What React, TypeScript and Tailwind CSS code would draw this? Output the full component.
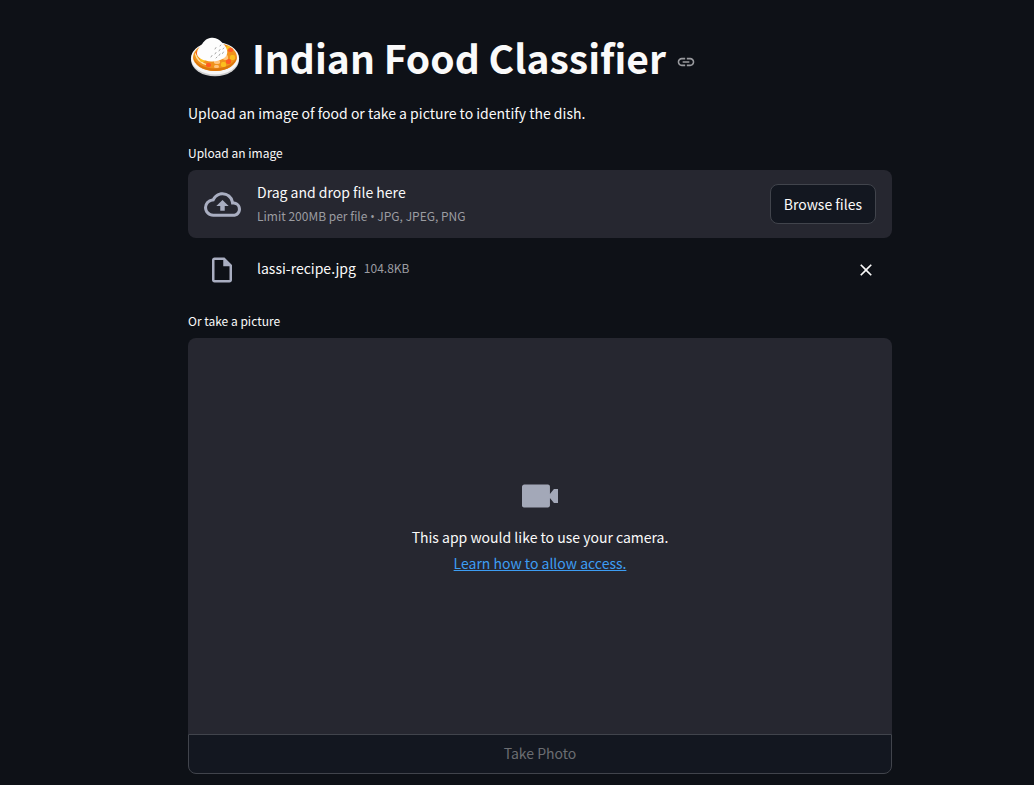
import type { ReactNode } from 'react'

function CurryEmoji() {
  return (
    <svg viewBox="0 0 50 40" className="h-10 w-[50px] shrink-0" role="img" aria-label="Curry and rice">
      <ellipse cx="25" cy="22.5" rx="24" ry="16.800" fill="#cfcfcf" />
      <ellipse cx="25" cy="21.3" rx="24" ry="16.300" fill="#f7f7f7" />
      <ellipse cx="25" cy="20" rx="22" ry="14" fill="#f0921c" />
      <path d="M3.2 20c1 7 9 14 22 14S46 27 46.9 20c-3 6.500-11 11.500-21.900 11.500S6 26.500 3.200 20z" fill="#db760c" />
      <path d="M5.500 17c1 5 5 9 12 11" fill="none" stroke="#ffe3a0" strokeWidth="1.300" strokeLinecap="round" />
      <g fill="#fbbf1e">
        <rect x="10" y="20" width="5" height="5" rx="1.800" />
        <rect x="31" y="25" width="5" height="5" rx="1.800" />
        <rect x="40" y="18" width="5" height="5" rx="1.800" />
        <rect x="36" y="9" width="4" height="4" rx="1.800" />
      </g>
      <g fill="#ff5a23">
        <rect x="16" y="26" width="5" height="4" rx="1.800" />
        <rect x="36" y="22" width="5" height="5" rx="1.800" />
        <rect x="38" y="11" width="5" height="4" rx="1.800" />
        <rect x="6" y="14" width="3" height="4" rx="1.500" />
      </g>
      <g fill="#ffc47c">
        <rect x="24" y="23" width="6" height="4" rx="1.800" />
        <rect x="33" y="18" width="5" height="5" rx="1.800" />
        <rect x="24" y="28" width="5" height="3" rx="1.500" />
      </g>
      <path d="M7 16C7.500 11 11 9 12.500 6.500S17 1 21.500.7c5-.5 8 2 10 4.300s4.500 4 5.500 8-1 7.500-4.500 9-7 2.700-11.500 2.400C14 24 6.500 21 7 16z" fill="#fdfdfd" />
      <path d="M25 17l1-1.500M29 14l1-1.500M25 12l1-1.500M29 18.500l1-1.500M32.500 16.500l1-1.500M21 20l1-1.500M30 9l.8-1M33 12l.8-1M26 21l1-1" stroke="#a8a8a8" strokeWidth="1" strokeLinecap="round" />
    </svg>
  )
}

function Icon({ className, children, viewBox = '0 0 24 24' }: { className: string; children: ReactNode; viewBox?: string }) {
  return (
    <svg viewBox={viewBox} fill="currentColor" aria-hidden="true" className={className}>
      {children}
    </svg>
  )
}

export default function App() {
  return (
    <div className="min-h-screen bg-[#0e1117] pl-[46px] font-['Noto_Sans_CJK_SC',sans-serif] text-sm leading-6 text-[#fafafa]">
      <main className="mx-auto max-w-[736px] px-4 pt-8 pb-3">
        <header className="flex items-start">
          <h1 className="flex items-center gap-3 pl-0.5 text-[39px] leading-[50px] font-bold">
            <CurryEmoji />
            Indian Food Classifier
          </h1>
          <a href="#indian-food-classifier" aria-label="Link to heading" className="ml-2.5 pt-5 text-[#9a9b9f]">
            <Icon className="size-5">
              <path d="M3.900 12c0-1.710 1.390-3.100 3.100-3.100h4V7H7c-2.760 0-5 2.240-5 5s2.240 5 5 5h4v-1.900H7c-1.710 0-3.100-1.390-3.100-3.100zM8 13h8v-2H8v2zm9-6h-4v1.900h4c1.710 0 3.100 1.390 3.100 3.100s-1.390 3.100-3.100 3.100h-4V17h4c2.760 0 5-2.240 5-5s-2.240-5-5-5z" />
            </Icon>
          </a>
        </header>
        <p className="mt-[19px]">Upload an image of food or take a picture to identify the dish.</p>

        <section className="mt-4">
          <label htmlFor="browse" className="block pb-[5px] text-xs leading-6">Upload an image</label>
          <div className="flex h-[68px] items-center rounded-lg bg-[#262730] px-4">
            <Icon className="size-[37px] text-[#a9aec1]">
              <path d="M19.350 10.040A7.490 7.490 0 0012 4C9.110 4 6.600 5.640 5.350 8.040A5.994 5.994 0 000 14c0 3.310 2.690 6 6 6h13c2.760 0 5-2.240 5-5 0-2.640-2.050-4.780-4.650-4.960zM19 18H6c-2.210 0-4-1.790-4-4 0-2.050 1.530-3.760 3.560-3.970l1.070-.110.500-.950A5.469 5.469 0 0112 6c2.620 0 4.880 1.860 5.390 4.430l.300 1.500 1.530.110A2.980 2.980 0 0122 15c0 1.650-1.350 3-3 3zM8 13h2.550v3h2.900v-3H16l-4-4z" />
            </Icon>
            <div className="ml-4 flex-1">
              <div>Drag and drop file here</div>
              <div className="text-xs leading-6 text-[#9b9ca1]">
                Limit 200MB per file <span className="font-['Open_Sans',sans-serif]">•</span> JPG, JPEG, PNG
              </div>
            </div>
            <button id="browse" type="button" className="h-10 rounded-lg border border-[#41444c] bg-[#131720] px-[13px]">
              Browse files
            </button>
          </div>
          <div className="flex h-16 items-center pr-4 pl-[19px]">
            <Icon className="size-[30px] text-[#a9aec1]">
              <path d="M14 2H6c-1.100 0-2 .9-2 2v16c0 1.100.890 2 1.990 2H18c1.100 0 2-.9 2-2V8l-6-6zM6 20V4h7v5h5v11H6z" />
            </Icon>
            <div className="ml-5 flex flex-1 items-center gap-2 pb-1">
              <span>lassi-recipe.jpg</span>
              <span className="text-xs leading-6 text-[#9b9ca1]">104.8KB</span>
            </div>
            <button type="button" aria-label="Remove lassi-recipe.jpg">
              <Icon className="size-5">
                <path d="M19 6.410L17.590 5 12 10.590 6.410 5 5 6.410 10.590 12 5 17.590 6.410 19 12 13.410 17.590 19 19 17.590 13.410 12z" />
              </Icon>
            </button>
          </div>
        </section>

        <section className="mt-[7px]" aria-labelledby="camera-label">
          <h2 id="camera-label" className="pb-[5px] text-xs leading-6">Or take a picture</h2>
          <div className="flex h-[396px] flex-col items-center rounded-t-lg bg-[#262730] pt-[146px]">
            <Icon className="size-9 text-[#a3a8b8]" viewBox="0 0 8 8">
              <path d="M.5.100C.220.100 0 .330 0 .600v4.160c0 .280.220.440.440.440h5.330c.220 0 .440-.220.440-.440V.540C6.210.320 5.990.100 5.770.100zM7.100 1.100L6.200 2.200v.9L7.100 4.200H8V1.100z" />
            </Icon>
            <p className="mt-1 leading-[26px]">This app would like to use your camera.</p>
            <a href="#allow-access" className="leading-[26px] text-[#3d9df3] underline">Learn how to allow access.</a>
          </div>
          <button type="button" disabled className="h-10 w-full rounded-b-lg border border-[#41444c] bg-[#131720] pb-0.5 text-[#6b6d72]">
            Take Photo
          </button>
        </section>
      </main>
    </div>
  )
}
